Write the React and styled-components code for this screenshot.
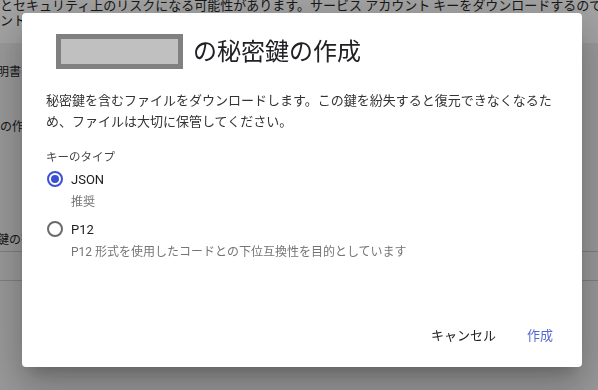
import React, { useState } from "react";
import styled, { createGlobalStyle } from "styled-components";

const GlobalStyle = createGlobalStyle`
  html, body {
    margin: 0;
    padding: 0;
    width: 598px;
    height: 390px;
    overflow: hidden;
    background: #f0f0f0;
    font-family: Roboto, "Noto Sans CJK JP", sans-serif;
  }
`;

const Page = styled.div`
  width: 598px;
  height: 390px;
  overflow: hidden;
  color: #262626;
  font-size: 13px;
`;

const Notice = styled.div`
  height: 43px;
  background: #ffffff;
  overflow: hidden;
`;

const NoticeText = styled.p`
  margin: -3px 0 0;
  line-height: 18px;
  white-space: nowrap;
`;

const PageRow = styled.div`
  height: ${(p) => p.$h}px;
  display: flex;
  align-items: center;
  white-space: nowrap;
  font-size: 12px;
  text-indent: ${(p) => p.$indent || 0}px;
  border-bottom: ${(p) => (p.$line ? "1px solid #c8c8c8" : "none")};
  box-sizing: border-box;
`;

const Backdrop = styled.div`
  position: fixed;
  inset: 0;
  background: rgba(0, 0, 0, 0.36);
`;

const Dialog = styled.div`
  position: fixed;
  left: 22px;
  top: 13px;
  width: 560px;
  height: 354px;
  box-sizing: border-box;
  padding: 21px 24px 15px;
  background: #fff;
  border-radius: 4px;
  display: flex;
  flex-direction: column;
  box-shadow: 0 11px 15px -7px rgba(0, 0, 0, 0.2),
    0 24px 38px 3px rgba(0, 0, 0, 0.14), 0 9px 46px 8px rgba(0, 0, 0, 0.12);
`;

const TitleRow = styled.div`
  display: flex;
  align-items: center;
  gap: 10px;
  padding-left: 10px;
  height: 35px;
`;

const Redacted = styled.span`
  width: 127px;
  height: 35px;
  box-sizing: border-box;
  border: 5px solid #808080;
  background: #c0c0c0;
`;

const Title = styled.h2`
  margin: 0;
  font-size: 24px;
  font-weight: 400;
  color: #202124;
  line-height: 32px;
`;

const Body = styled.p`
  margin: 21px 0 0;
  font-size: 13px;
  line-height: 21px;
  color: #333;
`;

const GroupLabel = styled.div`
  margin-top: 17px;
  font-size: 11.5px;
  line-height: 16px;
  color: #444;
`;

const Option = styled.label`
  display: flex;
  align-items: center;
  gap: 8px;
  height: 24px;
  margin-top: ${(p) => p.$top}px;
  cursor: pointer;
  font-size: 13px;
  font-weight: 400;
  color: #202124;
`;

const RadioRing = styled.span`
  width: 16px;
  height: 16px;
  box-sizing: border-box;
  border-radius: 50%;
  border: 2px solid ${(p) => (p.$checked ? "#3b50d3" : "#6a6a6a")};
  display: flex;
  align-items: center;
  justify-content: center;
  margin-left: 1px;

  &::after {
    content: "";
    width: 8px;
    height: 8px;
    border-radius: 50%;
    background: ${(p) => (p.$checked ? "#3b50d3" : "transparent")};
  }
`;

const Hint = styled.div`
  margin-top: 2px;
  padding-left: 25px;
  font-size: 12px;
  line-height: 18px;
  color: #757575;
`;

const Actions = styled.div`
  margin-top: auto;
  margin-right: -3px;
  display: flex;
  justify-content: flex-end;
  gap: 15px;
`;

const Button = styled.button`
  border: none;
  background: none;
  height: 36px;
  padding: 0 8px;
  font-family: inherit;
  font-size: 13px;
  color: ${(p) => (p.$primary ? "#5468d4" : "#202124")};
  cursor: pointer;
`;

const options = [
  { id: "json", name: "JSON", hint: "推奨", top: 2 },
  {
    id: "p12",
    name: "P12",
    hint: "P12 形式を使用したコードとの下位互換性を目的としています",
    top: 6,
  },
];

export default function App() {
  const [keyType, setKeyType] = useState("json");

  return (
    <>
      <GlobalStyle />
      <Page>
        <Notice>
          <NoticeText>
            とセキュリティ上のリスクになる可能性があります。サービス アカウント キーをダウンロードするので
          </NoticeText>
          <NoticeText>ントを保護</NoticeText>
        </Notice>
        <PageRow $h={54} $indent={-3}>明書をアップロード</PageRow>
        <PageRow $h={56}>の作成</PageRow>
        <PageRow $h={72} />
        <PageRow $h={27} $indent={-3} $line>
          鍵の有効期限
        </PageRow>
        <PageRow $h={29} $line />
      </Page>
      <Backdrop />
      <Dialog role="dialog">
        <TitleRow>
          <Redacted />
          <Title>の秘密鍵の作成</Title>
        </TitleRow>
        <Body>
          秘密鍵を含むファイルをダウンロードします。この鍵を紛失すると復元できなくなるため、ファイルは大切に保管してください。
        </Body>
        <GroupLabel>キーのタイプ</GroupLabel>
        {options.map((opt) => (
          <React.Fragment key={opt.id}>
            <Option $top={opt.top} onClick={() => setKeyType(opt.id)}>
              <RadioRing $checked={keyType === opt.id} />
              {opt.name}
            </Option>
            <Hint>{opt.hint}</Hint>
          </React.Fragment>
        ))}
        <Actions>
          <Button>キャンセル</Button>
          <Button $primary>作成</Button>
        </Actions>
      </Dialog>
    </>
  );
}
